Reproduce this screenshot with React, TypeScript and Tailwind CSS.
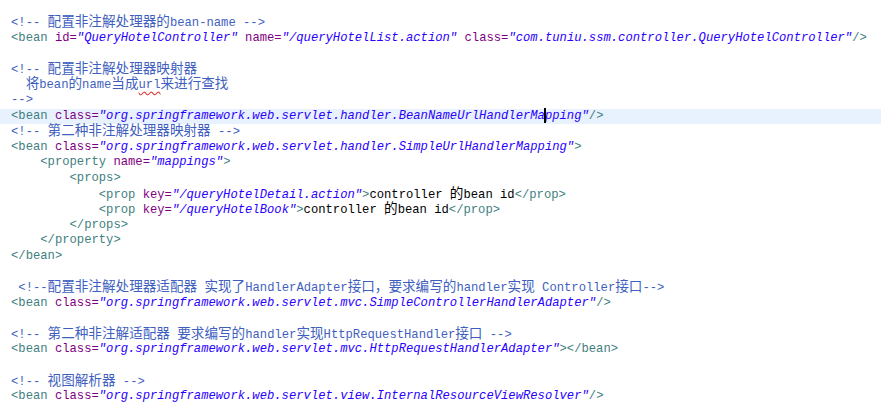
import React from 'react'

type Seg = [string, string]

const colors: Record<string, string> = {
  c: 'text-[#3F5FBF]',
  u: 'text-[#3F5FBF] underline decoration-wavy decoration-[#e0403a] underline-offset-2',
  t: 'text-[#3F7F7F]',
  a: 'text-[#7F007F]',
  v: 'text-[#2A00FF] italic',
  x: 'text-black',
}

const bean = (cls: string, end: string = '/>'): Seg[] => [
  ['t', '<bean '],
  ['a', 'class='],
  ['v', `"${cls}"`],
  ['t', end],
]

const lines: Seg[][] = [
  [['c', '<!-- 配置非注解处理器的bean-name -->']],
  [
    ['t', '<bean '],
    ['a', 'id='],
    ['v', '"QueryHotelController"'],
    ['t', ' '],
    ['a', 'name='],
    ['v', '"/queryHotelList.action"'],
    ['t', ' '],
    ['a', 'class='],
    ['v', '"com.tuniu.ssm.controller.QueryHotelController"'],
    ['t', '/>'],
  ],
  [],
  [['c', '<!-- 配置非注解处理器映射器']],
  [['c', '  将bean的name当成'], ['u', 'url'], ['c', '来进行查找']],
  [['c', '-->']],
  [
    ['t', '<bean '],
    ['a', 'class='],
    ['v', '"org.springframework.web.servlet.handler.BeanNameUrlHandlerMa'],
    ['cursor', ''],
    ['v', 'pping"'],
    ['t', '/>'],
  ],
  [['c', '<!-- 第二种非注解处理器映射器 -->']],
  bean('org.springframework.web.servlet.handler.SimpleUrlHandlerMapping', '>'),
  [['t', '    <property '], ['a', 'name='], ['v', '"mappings"'], ['t', '>']],
  [['t', '        <props>']],
  [
    ['t', '            <prop '],
    ['a', 'key='],
    ['v', '"/queryHotelDetail.action"'],
    ['t', '>'],
    ['x', 'controller 的bean id'],
    ['t', '</prop>'],
  ],
  [
    ['t', '            <prop '],
    ['a', 'key='],
    ['v', '"/queryHotelBook"'],
    ['t', '>'],
    ['x', 'controller 的bean id'],
    ['t', '</prop>'],
  ],
  [['t', '        </props>']],
  [['t', '    </property>']],
  [['t', '</bean>']],
  [],
  [['c', ' <!--配置非注解处理器适配器 实现了HandlerAdapter接口，要求编写的handler实现 Controller接口-->']],
  bean('org.springframework.web.servlet.mvc.SimpleControllerHandlerAdapter'),
  [],
  [['c', '<!-- 第二种非注解适配器 要求编写的handler实现HttpRequestHandler接口 -->']],
  bean('org.springframework.web.servlet.mvc.HttpRequestHandlerAdapter', '></bean>'),
  [],
  [['c', '<!-- 视图解析器 -->']],
  bean('org.springframework.web.servlet.view.InternalResourceViewResolver'),
]

// CJK glyphs are drawn wider than the mono font in the editor
function Text({ text }: { text: string }) {
  const parts = text.split(/([\u3000-\u9fff\uff00-\uffef]+)/)
  return (
    <>
      {parts.map((p, i) =>
        i % 2 === 1 ? (
          <span key={i} className="leading-[10px] text-[13.6px] font-['Noto_Sans_CJK_SC',sans-serif]">
            {p}
          </span>
        ) : (
          <React.Fragment key={i}>{p}</React.Fragment>
        )
      )}
    </>
  )
}

export default function App() {
  return (
    <div className="w-[881px] h-[407px] bg-white overflow-hidden pt-[15px] font-['Liberation_Mono','Noto_Sans_CJK_SC',monospace] text-[12.2px]">
      {lines.map((segs, i) => (
        <div
          key={i}
          className={`h-[15.6px] leading-[15.6px] pl-[11px] whitespace-pre ${i === 6 ? 'bg-[#E8F2FE]' : ''}`}
        >
          {segs.map(([type, text], j) =>
            type === 'cursor' ? (
              <span key={j} className="relative">
                <span className="absolute left-[-1px] top-[-1px] w-[2px] h-[15px] bg-black" />
              </span>
            ) : (
              <span key={j} className={colors[type]}>
                <Text text={text} />
              </span>
            )
          )}
        </div>
      ))}
    </div>
  )
}
